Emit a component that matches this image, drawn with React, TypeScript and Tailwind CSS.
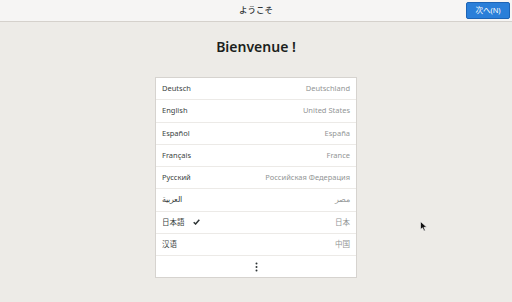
import React from 'react';

const languages = [
  { name: 'Deutsch', region: 'Deutschland' },
  { name: 'English', region: 'United States' },
  { name: 'Español', region: 'España' },
  { name: 'Français', region: 'France' },
  { name: 'Русский', region: 'Российская Федерация' },
  { name: 'العربية', region: 'مصر' },
  { name: '日本語', region: '日本', selected: true },
  { name: '汉语', region: '中国' },
];

export default function App() {
  return (
    <div
      className="relative w-[512px] h-[302px] bg-[#edebe7] text-[#2e3436] overflow-hidden"
      style={{ fontFamily: '"Noto Sans", "Noto Sans CJK JP", sans-serif' }}
    >
      {/* header bar */}
      <div className="h-[22px] bg-[#f6f5f4] border-b border-[#d5d1cc] flex items-center justify-center relative">
        <span className="text-[8.5px] font-medium text-[#2e3436]">ようこそ</span>
        <button className="absolute right-[2px] top-[2px] w-[44px] h-[17px] rounded-[2px] bg-[#2a7fd9] border border-[#1d64b5] text-white text-[7.5px] flex items-center justify-center">
          次へ(N)
        </button>
      </div>

      <h1 className="mt-[15px] text-center text-[14px] font-semibold leading-[20px] text-[#1c1f20]">Bienvenue !</h1>

      <div className="mx-auto mt-[20px] w-[202px] bg-white border border-[#d6d3cf]">
        {languages.map((lang) => (
          <div
            key={lang.name}
            className="h-[22.25px] px-[6px] flex items-center justify-between border-b border-[#eceae7] text-[7.5px]"
          >
            <span className="flex items-center gap-[8px] text-[#3a3f41]">
              {lang.name}
              {lang.selected && (
                <svg width="7" height="6" viewBox="0 0 7 6">
                  <path d="M0.7 3.2 L2.6 5 L6.3 0.8" stroke="#2e3436" strokeWidth="1.5" fill="none" />
                </svg>
              )}
            </span>
            <span className="text-[#929595]">{lang.region}</span>
          </div>
        ))}
        <div className="h-[21px] flex items-center justify-center">
          <svg width="3" height="10" viewBox="0 0 3 10">
            <circle cx="1.5" cy="1.5" r="1" fill="#2e3436" />
            <circle cx="1.5" cy="5" r="1" fill="#2e3436" />
            <circle cx="1.5" cy="8.5" r="1" fill="#2e3436" />
          </svg>
        </div>
      </div>

      {/* mouse pointer */}
      <svg className="absolute left-[420px] top-[221px]" width="8" height="11" viewBox="0 0 8 11">
        <path d="M0.5 0.5 L0.5 8.5 L2.5 6.8 L4 10 L5.3 9.4 L3.9 6.3 L6.8 6.3 Z" fill="#111" stroke="#fff" strokeWidth="0.6" />
      </svg>
    </div>
  );
}
